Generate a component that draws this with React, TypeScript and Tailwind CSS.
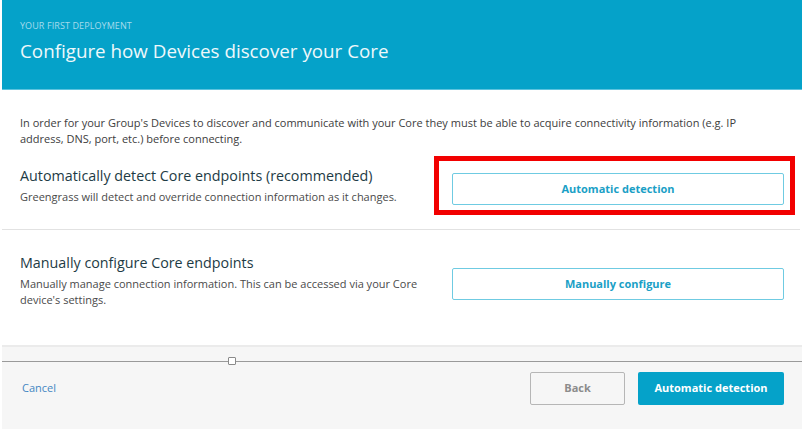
import React from 'react';

const font = { fontFamily: '"Open Sans", "Liberation Sans", sans-serif' };

export default function App() {
  return (
    <div className="w-[802px] h-[429px] bg-white overflow-hidden flex flex-col" style={font}>
      {/* Header */}
      <div className="ml-[2px] h-[90px] bg-[#05a2c9] border-b border-[#5cc3de] px-[18px] pt-[19px] shrink-0">
        <p className="text-[9px] leading-[14px] uppercase tracking-[0.01em] text-[#a6dcec]">Your first deployment</p>
        <h1 className="mt-[4px] text-[18.8px] leading-[28px] text-[#eef8fb]">Configure how Devices discover your Core</h1>
      </div>

      {/* Body */}
      <div className="ml-[2px] px-[18px] pt-[25px]">
        <p className="text-[11px] leading-[16px] text-[#3d3d3d] pr-[10px]">
          In order for your Group's Devices to discover and communicate with your Core they must be able to acquire connectivity information (e.g. IP address, DNS, port, etc.) before connecting.
        </p>

        <div className="grid grid-cols-[414px_332px] gap-x-[18px] mt-[19px] pb-[24px]">
          <div>
            <h2 className="text-[14.3px] leading-[20px] text-[#1d3b45]">Automatically detect Core endpoints (recommended)</h2>
            <p className="mt-[3px] text-[11px] leading-[16px] text-[#4a4a4a]">Greengrass will detect and override connection information as it changes.</p>
          </div>
          <div className="relative mt-[7px] h-[32px]">
            <div className="absolute -left-[18px] -right-[11px] -top-[17px] -bottom-[10px] border-[5px] border-[#f20000]" />
            <button className="w-full h-[32px] border border-[#6fcbe2] rounded-[2px] text-[11px] font-bold text-[#1a9fc6]">
              Automatic detection
            </button>
          </div>
        </div>
      </div>

      <div className="ml-[2px] mr-[2px] border-t border-[#e2e2e2]" />

      <div className="ml-[2px] px-[18px] pt-[23px]">
        <div className="grid grid-cols-[414px_332px] gap-x-[18px]">
          <div>
            <h2 className="text-[14.3px] leading-[20px] text-[#1d3b45]">Manually configure Core endpoints</h2>
            <p className="mt-[3px] text-[11px] leading-[16px] text-[#4a4a4a]">Manually manage connection information. This can be accessed via your Core device's settings.</p>
          </div>
          <div className="mt-[15px]">
            <button className="w-full h-[32px] border border-[#6fcbe2] rounded-[2px] text-[11px] font-bold text-[#1a9fc6]">
              Manually configure
            </button>
          </div>
        </div>
      </div>

      {/* Footer */}
      <div className="mt-auto ml-[2px] h-[84px] bg-[#f6f6f6] border-t-2 border-[#ebebeb] flex flex-col">
        <div className="relative mt-[14px] h-px bg-[#9a9a9a]">
          <div className="absolute left-[226px] -top-[4px] w-[8px] h-[8px] bg-white border border-[#8a8a8a] rounded-[1px]" />
        </div>
        <div className="flex items-center justify-between pl-[20px] pr-[18px] mt-[10px]">
          <span className="text-[11px] text-[#4486c2]">Cancel</span>
          <div className="flex gap-[13px]">
            <button className="w-[95px] h-[33px] border border-[#b6b6b6] rounded-[2px] bg-[#f6f6f6] text-[11px] font-bold text-[#8c8c8c]">Back</button>
            <button className="w-[146px] h-[33px] rounded-[2px] bg-[#05a2c9] text-[11px] font-bold text-white">Automatic detection</button>
          </div>
        </div>
      </div>
    </div>
  );
}
